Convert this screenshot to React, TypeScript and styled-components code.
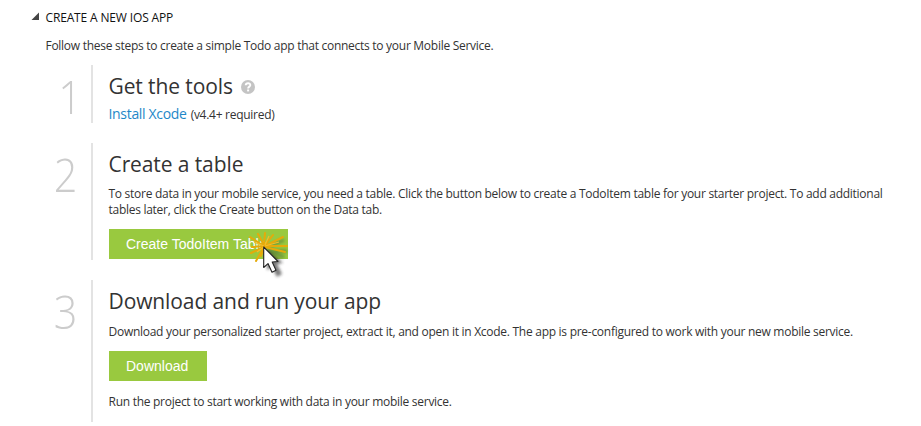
import React from "react";
import styled, { createGlobalStyle } from "styled-components";

const GlobalStyle = createGlobalStyle`
  html, body { margin: 0; padding: 0; background: #fff; }
  body { font-family: "Open Sans", "Noto Sans", sans-serif; color: #333; overflow: hidden; }
  * { box-sizing: border-box; }
`;

const Page = styled.main`
  width: 921px;
  height: 426px;
  padding: 9px 0 0 31px;
  overflow: hidden;
`;

const SectionHeader = styled.header`
  display: flex;
  align-items: center;
  height: 18px;
`;

const Disclosure = styled.svg`
  width: 14.5px;
  height: 18px;
  flex: none;
`;

const SectionTitle = styled.h1`
  margin: 0;
  font-size: 12px;
  line-height: 18px;
  font-weight: 400;
  color: #111;
  letter-spacing: -0.15px;
  white-space: nowrap;
`;

const Text = styled.p`
  margin: 0;
  font-size: 12px;
  line-height: 16px;
  letter-spacing: -0.275px;
  white-space: nowrap;
`;

const Intro = styled(Text)`
  margin: 11px 0 0 14.5px;
`;

const Steps = styled.ol`
  list-style: none;
  margin: 11px 0 0;
  padding: 0;
  display: grid;
  grid-template-rows: 58px 117px 142px;
  row-gap: 20px;
`;

const Step = styled.li`
  display: grid;
  grid-template-columns: 60px 1fr;
`;

const StepNumber = styled.div<{ $inset?: number }>`
  padding: 6px ${(p) => p.$inset ?? 15}px 0 0;
  font-size: 46px;
  line-height: 50px;
  height: 56px;
  font-weight: 300;
  color: #ccc;
  text-align: right;
  transform: scaleX(0.9);
  transform-origin: right;
`;

const StepBody = styled.div`
  border-left: 2px solid #e3e3e3;
  padding: 7px 0 0 15.5px;
  min-width: 0;
`;

const StepTitle = styled.h2<{ $gap?: number }>`
  display: flex;
  align-items: center;
  margin: 0 0 ${(p) => p.$gap ?? 7}px;
  font-size: 21px;
  line-height: 29px;
  font-weight: 400;
  letter-spacing: -0.1px;
  white-space: nowrap;
`;

const HelpIcon = styled.svg`
  width: 14px;
  height: 14px;
  margin: 1px 0 0 8px;
`;

const ToolLine = styled.div`
  display: flex;
  align-items: baseline;
  gap: 4px;
  margin-top: -3px;
`;

const Link = styled.a`
  font-size: 14px;
  line-height: 18px;
  color: #1e87c8;
  letter-spacing: -0.32px;
  text-decoration: none;
  white-space: nowrap;
`;

const Button = styled.button<{ $width: number }>`
  position: relative;
  display: block;
  width: ${(p) => p.$width}px;
  height: 30px;
  margin: 11px 0 0;
  padding: 0 0 0 17.5px;
  border: 0;
  background: #99c93f;
  color: #fff;
  font-family: "Liberation Sans", Arial, sans-serif;
  font-size: 14px;
  line-height: 30px;
  text-align: left;
  white-space: nowrap;
`;

const ClickCursor = styled.svg`
  position: absolute;
  left: 131px;
  top: -9px;
  width: 60px;
  height: 64px;
  overflow: visible;
`;

const Closing = styled(Text)`
  margin-top: 13px;
`;

function Pointer() {
  return (
    <ClickCursor viewBox="0 0 60 64" aria-hidden="true">
      <defs>
        <filter id="soft" x="-50%" y="-50%" width="200%" height="200%">
          <feGaussianBlur stdDeviation="1.6" />
        </filter>
      </defs>
      <path d="M27 29 L27 50 L32 47 L37 57 L42 54 L37 44 L43 43 Z" fill="#222" opacity=".6" filter="url(#soft)" />
      <path d="M28 31 L47 31 M29 27 L44 20 M28 31 L44 37" stroke="#243" strokeWidth="3" opacity=".4" filter="url(#soft)" />
      <path
        d="M24 26 L10 17 M24 25 L18 14 M24 25 L25 13 M25 25 L33 15 M25 26 L43 17 M25 26 L47 26 M25 27 L45 32 M24 26 L12 27 M24 27 L11 33 M24 27 L16 41 M24 27 L21 36"
        stroke="#e5aa0a"
        strokeWidth="2"
        strokeLinecap="round"
        fill="none"
      />
      <path d="M24 26 L14 22 M25 25 L29 16 M25 26 L39 22 M24 27 L17 32" stroke="#f3bd2a" strokeWidth="1.200" fill="none" />
      <path d="M23.700 27 L23.700 47.500 L28 43.600 L32 52.200 L36 50.300 L32.200 42 L38 41.500 Z" fill="#fff" stroke="#222" strokeWidth="1.100" strokeLinejoin="round" />
    </ClickCursor>
  );
}

export default function App() {
  return (
    <>
      <GlobalStyle />
      <Page>
        <SectionHeader>
          <Disclosure viewBox="0 0 14.5 18" aria-hidden="true">
            <path d="M8 3.500 V11 H0.500 Z" fill="#444" />
          </Disclosure>
          <SectionTitle>CREATE A NEW IOS APP</SectionTitle>
        </SectionHeader>
        <Intro>Follow these steps to create a simple Todo app that connects to your Mobile Service.</Intro>
        <Steps>
          <Step>
            <StepNumber $inset={10}>1</StepNumber>
            <StepBody>
              <StepTitle>
                Get the tools
                <HelpIcon viewBox="0 0 14 14" aria-label="Help">
                  <circle cx="7" cy="7" r="7" fill="#c4c4c4" />
                  <path d="M4.700 5.300 C4.800 2.500 9.500 2.600 9.300 5.200 C9.200 6.700 7.200 6.600 7.100 8.500" fill="none" stroke="#fff" strokeWidth="1.900" />
                  <rect x="6.100" y="9.500" width="2" height="1.900" fill="#fff" />
                </HelpIcon>
              </StepTitle>
              <ToolLine>
                <Link>Install Xcode</Link>
                <Text as="span">(v4.4+ required)</Text>
              </ToolLine>
            </StepBody>
          </Step>
          <Step>
            <StepNumber>2</StepNumber>
            <StepBody>
              <StepTitle>Create a table</StepTitle>
              <Text>
                To store data in your mobile service, you need a table. Click the button below to create a TodoItem table for your starter project. To add additional
              </Text>
              <Text>tables later, click the Create button on the Data tab.</Text>
              <Button $width={179}>
                Create TodoItem Table
                <Pointer />
              </Button>
            </StepBody>
          </Step>
          <Step>
            <StepNumber>3</StepNumber>
            <StepBody>
              <StepTitle $gap={8}>Download and run your app</StepTitle>
              <Text>
                Download your personalized starter project, extract it, and open it in Xcode. The app is pre-configured to work with your new mobile service.
              </Text>
              <Button $width={98}>Download</Button>
              <Closing>Run the project to start working with data in your mobile service.</Closing>
            </StepBody>
          </Step>
        </Steps>
      </Page>
    </>
  );
}
